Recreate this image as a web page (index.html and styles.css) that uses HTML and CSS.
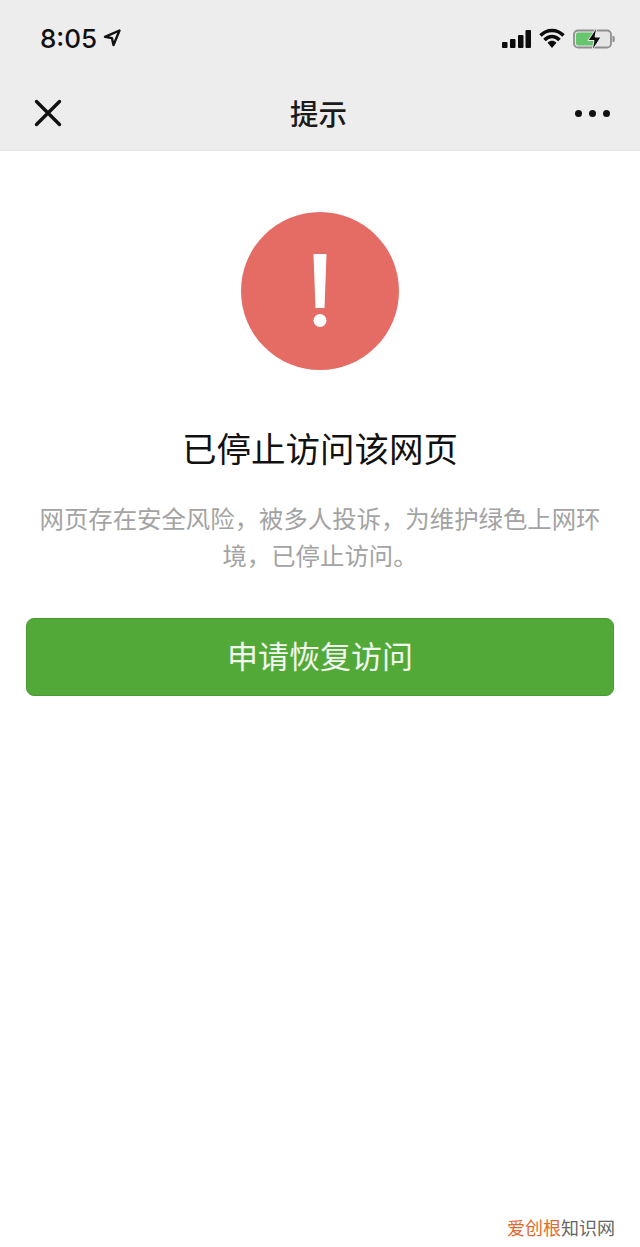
FILE: index.html
```html
<!DOCTYPE html>
<html lang="zh">
<head>
<meta charset="utf-8">
<title>提示</title>
<link rel="stylesheet" href="styles.css">
</head>
<body>
<div class="page">
  <header class="top">
    <div class="status">
      <div class="status-left">
        <span class="time">8:05</span>
        <svg class="loc" width="18" height="18" viewBox="0 0 18 18"><path d="M16.500 1.500 2 7.800l6.900 1.300 1.600 7z" fill="none" stroke="#111" stroke-width="2.400" stroke-linejoin="round"/></svg>
      </div>
      <div class="status-right">
        <svg width="30" height="20" viewBox="0 0 30 20"><g fill="#0c0c0c"><rect x="1" y="13" width="5.500" height="6" rx="1"/><rect x="9" y="10" width="5.500" height="9" rx="1"/><rect x="17" y="6" width="5.500" height="13" rx="1"/><rect x="24.500" y="1" width="5.500" height="18" rx="1"/></g></svg>
        <svg width="26" height="21" viewBox="0 0 26 21"><path d="M1.500 7.500C8 .8 18 .8 24.500 7.500M5.500 12C10 7.300 16 7.300 20.500 12" fill="none" stroke="#0c0c0c" stroke-width="3.500"/><path d="M8.600 14.800c2.800-2.600 6-2.600 8.800 0L13 20z" fill="#0c0c0c"/></svg>
        <svg class="batt" width="42" height="26" viewBox="-1 0 42 26"><rect x="0" y="4.500" width="37" height="17" rx="4" fill="#e6e6e6" stroke="#8f8f8f" stroke-width="1.800"/><rect x="2" y="6.500" width="20" height="13" rx="2" fill="#67c46f"/><path d="M38.500 10h1.500c1 0 1 6 0 6h-1.500z" fill="#8f8f8f"/><path d="M23 1 14 14.500h6L18 25l9-14h-6z" fill="#0c0c0c" stroke="#ededed"/></svg>
      </div>
    </div>
    <nav class="nav">
      <svg class="close" width="28" height="28" viewBox="0 0 28 28"><path d="M2.500 2.500l23 23M25.500 2.500l-23 23" stroke="#111" stroke-width="3.400" stroke-linecap="round"/></svg>
      <span class="nav-title">提示</span>
      <div class="more"><i></i><i></i><i></i></div>
    </nav>
  </header>
  <main class="content">
    <svg class="warn" width="158" height="158" viewBox="0 0 158 158">
      <circle cx="79" cy="79" r="79" fill="#e56c65"/>
      <path d="M72.500 42h13l-2 54h-9z" fill="#fff"/>
      <circle cx="79" cy="108.500" r="6.500" fill="#fff"/>
    </svg>
    <h1 class="title">已停止访问该网页</h1>
    <p class="desc">网页存在安全风险，被多人投诉，为维护绿色上网环境，已停止访问。</p>
    <div class="btn">申请恢复访问</div>
  </main>
  <footer class="mark"><span class="mark-o">爱创根</span>知识网</footer>
</div>
</body>
</html>
```
FILE: styles.css
```css
* { box-sizing: border-box; }
html, body { margin: 0; padding: 0; background: #fff; }
body { font-family: "Noto Sans CJK SC", "Liberation Sans", sans-serif; }
.page { width: 640px; height: 1247px; display: flex; flex-direction: column; overflow: hidden; }
.top { height: 151px; background: #ededed; border-bottom: 1px solid #e6e6e6; flex: none; }
.status { height: 76px; padding: 0 25px 0 40px; display: flex; justify-content: space-between; align-items: center; }
.status-left { display: flex; align-items: center; gap: 6px; }
.time { font-family: Inter, "Liberation Sans", sans-serif; font-size: 26px; font-weight: 500; color: #111; }
.loc { display: block; }
.status-right { display: flex; align-items: center; gap: 8px; margin-top: 1px; }
.batt { display: block; }
.nav { height: 74px; padding: 0 30px 0 34px; display: flex; align-items: center; justify-content: space-between; }
.nav-title { font-size: 28.500px; line-height: 40px; font-weight: 500; color: #1a1a1a; }
.close { display: block; }
.more { display: flex; gap: 7px; }
.more i { width: 7px; height: 7px; border-radius: 50%; background: #111; display: block; }
.content { flex: 1; padding: 61px 26px 0; display: flex; flex-direction: column; align-items: center; }
.warn { display: block; flex: none; }
.title { margin: 54px 0 0; font-size: 34.500px; line-height: 46px; font-weight: 400; color: #111; }
.desc { margin: 29px 0 0; width: 564px; font-size: 24.400px; line-height: 37px; color: #a3a3a3; text-align: center; }
.btn { margin-top: 45px; padding-bottom: 5px; width: 588px; height: 78px; background: #52a938; border: 1px solid #4a9a34; border-radius: 8px; color: #f2f8ef; font-size: 31px; display: flex; align-items: center; justify-content: center; }
.mark { padding: 0 25px 7px 0; text-align: right; font-size: 18px; line-height: 26px; color: #666; }
.mark-o { color: #e06a2c; }
```
